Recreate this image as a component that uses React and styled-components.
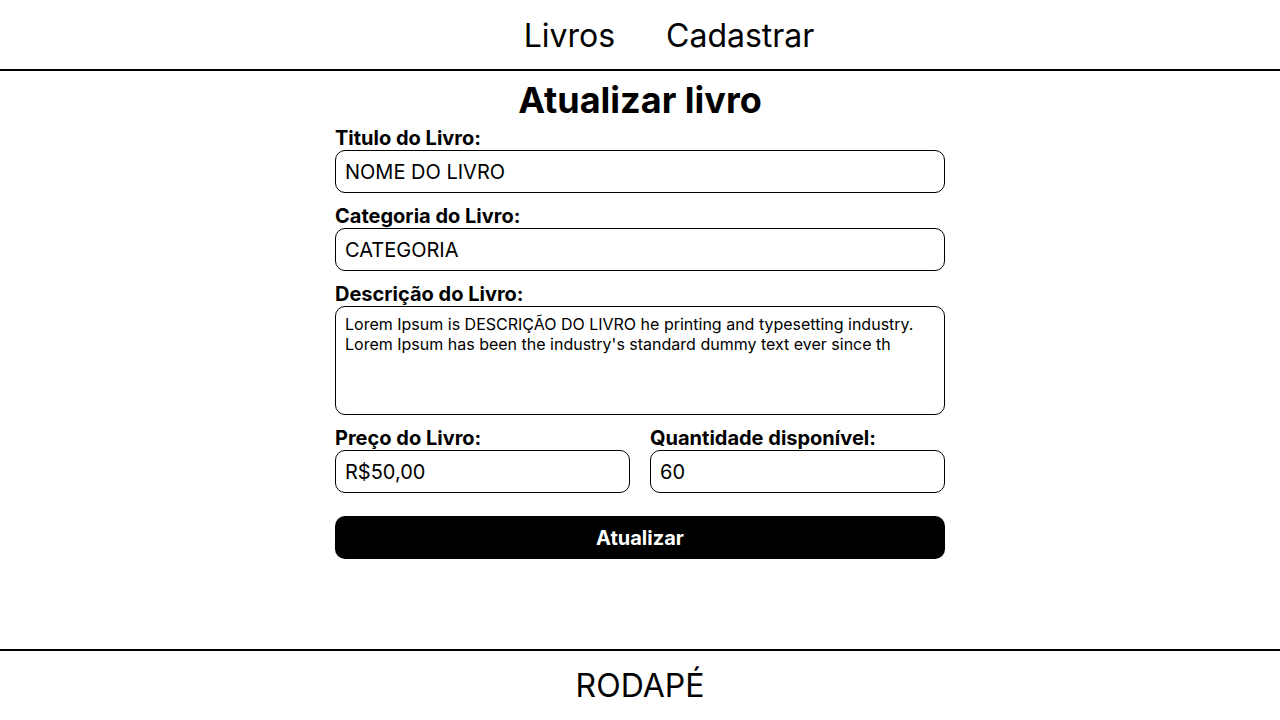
import React from "react";
import styled, { createGlobalStyle } from "styled-components";

const Global = createGlobalStyle`
  html, body { margin: 0; padding: 0; background: #fff; }
  body { font-family: Inter, "Noto Sans", sans-serif; color: #000; }
  * { box-sizing: border-box; }
`;

const Page = styled.div`
  min-height: 100vh;
  display: flex;
  flex-direction: column;
`;

const Header = styled.header`
  height: 71px;
  border-bottom: 2px solid #000;
  display: flex;
  align-items: center;
  justify-content: center;
  padding-top: 1px;
`;

const Nav = styled.nav`
  display: flex;
  gap: 51px;
  padding-left: 58px;
`;

const NavLink = styled.a`
  font-size: 32px;
  font-weight: 400;
  color: #000;
  text-decoration: none;
`;

const Main = styled.main`
  flex: 1;
  display: flex;
  flex-direction: column;
  align-items: center;
`;

const Title = styled.h1`
  margin: 7px 0 0;
  font-size: 36px;
  font-weight: 700;
  line-height: normal;
`;

const Form = styled.form`
  width: 610px;
  margin-top: 4px;
  display: flex;
  flex-direction: column;
  gap: 11px;
`;

const Field = styled.div`
  display: flex;
  flex-direction: column;
  flex: 1;
  min-width: 0;
`;

const Label = styled.label`
  font-size: 20px;
  font-weight: 700;
  line-height: 24px;
`;

const Input = styled.input`
  width: 100%;
  min-width: 0;
  height: 43px;
  border: 1px solid #000;
  border-radius: 10px;
  padding: 0 9px;
  font-family: Inter, sans-serif;
  font-size: 20px;
  color: #000;
  outline: none;
`;

const TextArea = styled.textarea`
  height: 109px;
  border: 1px solid #000;
  border-radius: 10px;
  padding: 7px 9px;
  font-family: Inter, sans-serif;
  font-size: 16px;
  line-height: 20px;
  color: #000;
  resize: none;
  outline: none;
`;

const Row = styled.div`
  display: flex;
  gap: 20px;
`;

const Button = styled.button`
  margin-top: 12px;
  height: 43px;
  border: none;
  border-radius: 10px;
  background: #000;
  color: #fff;
  font-family: Inter, sans-serif;
  font-size: 20px;
  font-weight: 700;
  cursor: pointer;
`;

const Footer = styled.footer`
  height: 71px;
  border-top: 2px solid #000;
  display: flex;
  align-items: center;
  justify-content: center;
  font-size: 32px;
  font-weight: 400;
`;

export default function App() {
  return (
    <Page>
      <Global />
      <Header>
        <Nav>
          <NavLink href="#">Livros</NavLink>
          <NavLink href="#">Cadastrar</NavLink>
        </Nav>
      </Header>
      <Main>
        <Title>Atualizar livro</Title>
        <Form onSubmit={(e) => e.preventDefault()}>
          <Field>
            <Label>Titulo do Livro:</Label>
            <Input defaultValue="NOME DO LIVRO" />
          </Field>
          <Field>
            <Label>Categoria do Livro:</Label>
            <Input defaultValue="CATEGORIA" />
          </Field>
          <Field>
            <Label>Descrição do Livro:</Label>
            <TextArea defaultValue={"Lorem Ipsum is DESCRIÇÃO DO LIVRO he printing and typesetting industry. Lorem Ipsum has been the industry's standard dummy text ever since th"} />
          </Field>
          <Row>
            <Field>
              <Label>Preço do Livro:</Label>
              <Input defaultValue="R$50,00" />
            </Field>
            <Field>
              <Label>Quantidade disponível:</Label>
              <Input defaultValue="60" />
            </Field>
          </Row>
          <Button type="submit">Atualizar</Button>
        </Form>
      </Main>
      <Footer>RODAPÉ</Footer>
    </Page>
  );
}
